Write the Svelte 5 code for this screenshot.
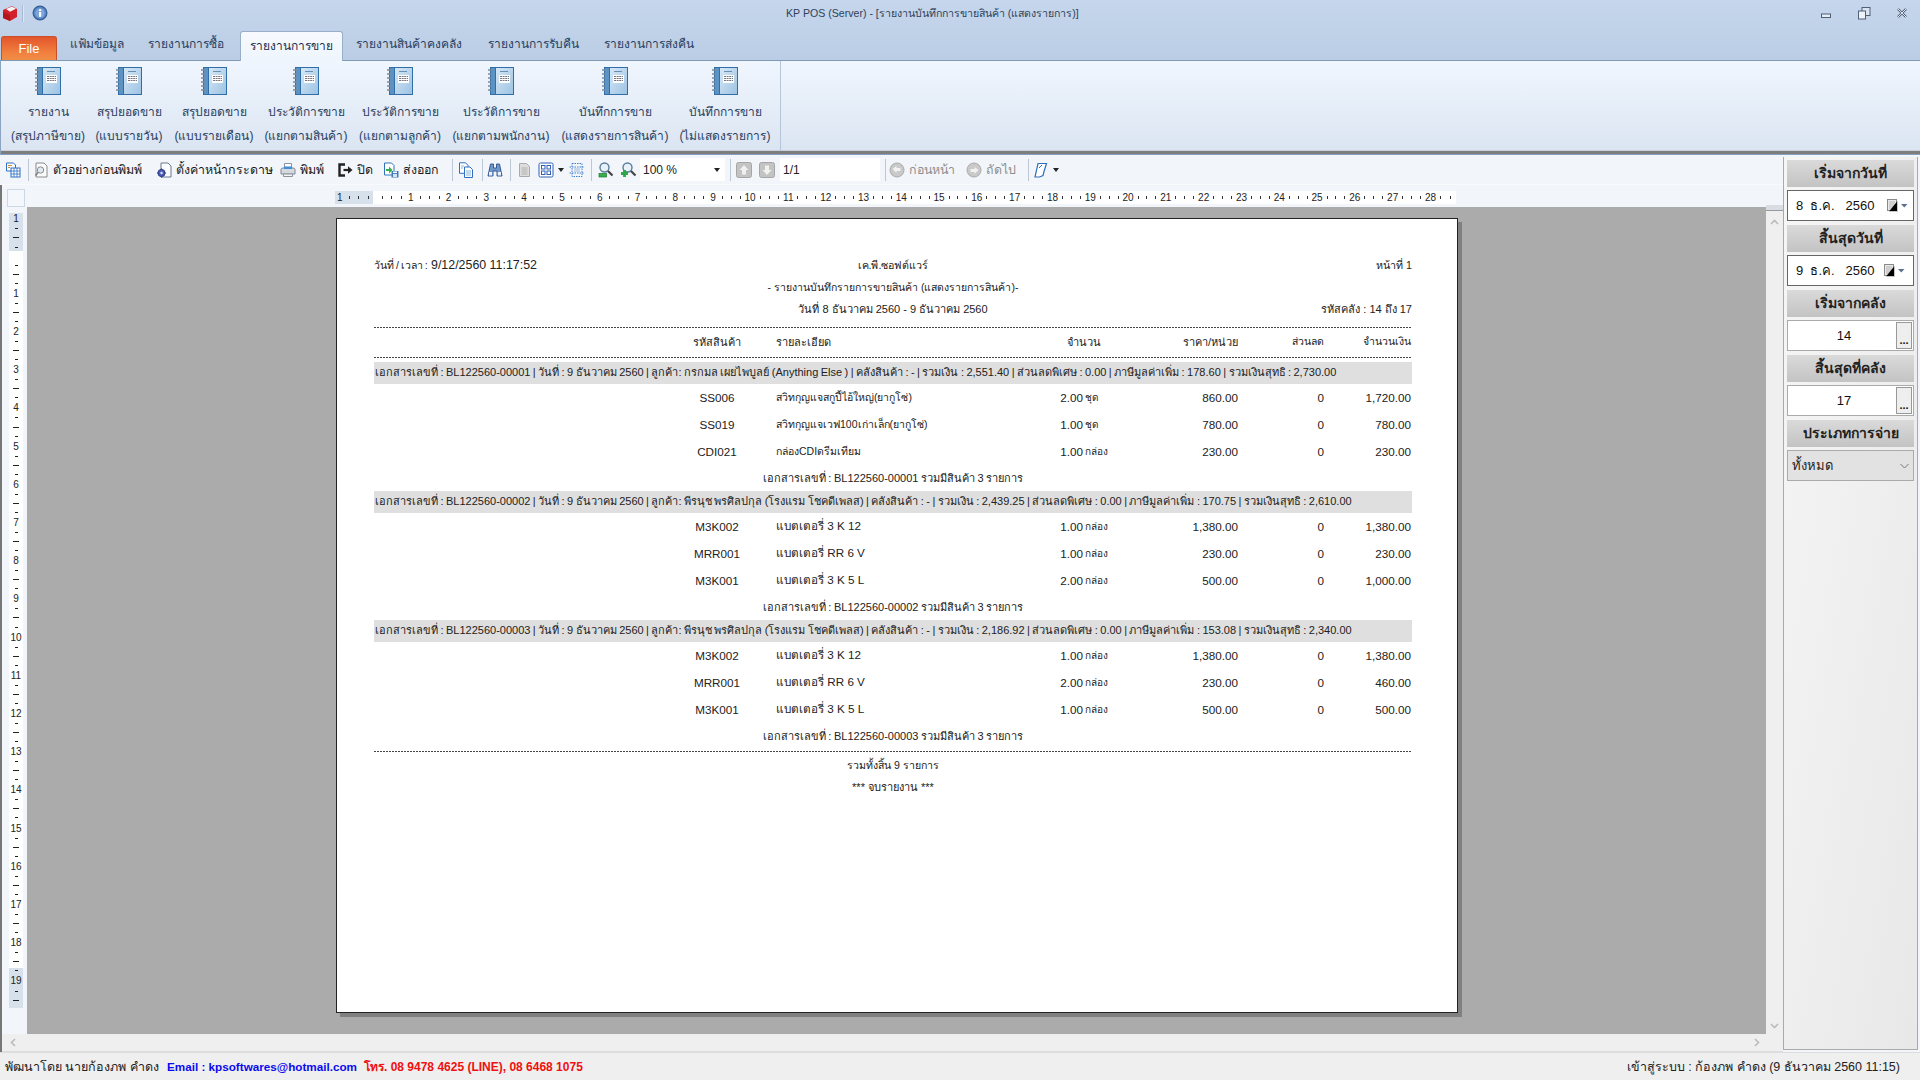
<script>
  const tabs = [
    { t: 'แฟ้มข้อมูล', w: 70 },
    { t: 'รายงานการซื้อ', w: 108 },
    { t: 'รายงานการขาย', w: 103, active: true },
    { t: 'รายงานสินค้าคงคลัง', w: 132 },
    { t: 'รายงานการรับคืน', w: 116 },
    { t: 'รายงานการส่งคืน', w: 116 }
  ];
  const rib = [
    ['รายงาน', '(สรุปภาษีขาย)', 88],
    ['สรุปยอดขาย', '(แบบรายวัน)', 74],
    ['สรุปยอดขาย', '(แบบรายเดือน)', 96],
    ['ประวัติการขาย', '(แยกตามสินค้า)', 88],
    ['ประวัติการขาย', '(แยกตามลูกค้า)', 100],
    ['ประวัติการขาย', '(แยกตามพนักงาน)', 102],
    ['บันทึกการขาย', '(แสดงรายการสินค้า)', 126],
    ['บันทึกการขาย', '(ไม่แสดงรายการ)', 94]
  ];
  const rawTools = [
    { x: 5, w: 16, i: 'views' },
    { x: 28, w: 1, sep: true },
    { x: 33, w: 117, i: 'preview', t: 'ตัวอย่างก่อนพิมพ์' },
    { x: 156, w: 119, i: 'setup', t: 'ตั้งค่าหน้ากระดาษ' },
    { x: 280, w: 50, i: 'print', t: 'พิมพ์' },
    { x: 337, w: 39, i: 'exit', t: 'ปิด' },
    { x: 383, w: 62, i: 'export', t: 'ส่งออก' },
    { x: 452, w: 1, sep: true },
    { x: 458, w: 16, i: 'copy' },
    { x: 482, w: 1, sep: true },
    { x: 487, w: 16, i: 'bino' },
    { x: 510, w: 1, sep: true },
    { x: 516, w: 16, i: 'gdoc' },
    { x: 538, w: 26, i: 'multi', drop: true },
    { x: 569, w: 16, i: 'dotted' },
    { x: 591, w: 1, sep: true },
    { x: 598, w: 16, i: 'zout' },
    { x: 621, w: 16, i: 'zin' },
    { x: 640, w: 85, combo: true },
    { x: 730, w: 1, sep: true },
    { x: 736, w: 16, i: 'up' },
    { x: 759, w: 16, i: 'down' },
    { x: 780, w: 100, pg: true },
    { x: 885, w: 1, sep: true },
    { x: 889, w: 68, i: 'back', t: 'ก่อนหน้า', dis: true },
    { x: 966, w: 51, i: 'next', t: 'ถัดไป', dis: true },
    { x: 1028, w: 1, sep: true },
    { x: 1033, w: 26, i: 'pen', drop: true }
  ];
  let prevEnd = 0;
  const tools = rawTools.map((o) => {
    const r = { ...o, ml: o.x - prevEnd };
    prevEnd = o.x + o.w;
    return r;
  });

  const inches = Array.from({ length: 28 }, (_, i) => i + 1);
  const vinches = Array.from({ length: 19 }, (_, i) => i + 1);

  const doc = [
    {
      no: '00001',
      head: 'เอกสารเลขที่ : BL122560-00001 | วันที่ : 9 ธันวาคม 2560 | ลูกค้า: กรกมล เผยไพบูลย์ (Anything Else ) | คลังสินค้า : - | รวมเงิน : 2,551.40 | ส่วนลดพิเศษ : 0.00 | ภาษีมูลค่าเพิ่ม : 178.60 | รวมเงินสุทธิ : 2,730.00',
      items: [
        ['SS006', 'สวิทกุญแจสกูปี้ไอ้ใหญ่(ยากูโซ่)', '2.00', 'ชุด', '860.00', '1,720.00', true],
        ['SS019', 'สวิทกุญแจเวฟ100เก่าเล็ก(ยากูโซ่)', '1.00', 'ชุด', '780.00', '780.00', true],
        ['CDI021', 'กล่องCDIดรีมเทียม', '1.00', 'กล่อง', '230.00', '230.00', true]
      ]
    },
    {
      no: '00002',
      head: 'เอกสารเลขที่ : BL122560-00002 | วันที่ : 9 ธันวาคม 2560 | ลูกค้า: พีรนุช พรศิลปกุล (โรงแรม โชคดีเพลส) | คลังสินค้า : - | รวมเงิน : 2,439.25 | ส่วนลดพิเศษ : 0.00 | ภาษีมูลค่าเพิ่ม : 170.75 | รวมเงินสุทธิ : 2,610.00',
      items: [
        ['M3K002', 'แบตเตอรี่ 3 K 12', '1.00', 'กล่อง', '1,380.00', '1,380.00'],
        ['MRR001', 'แบตเตอรี่ RR 6 V', '1.00', 'กล่อง', '230.00', '230.00'],
        ['M3K001', 'แบตเตอรี่ 3 K 5 L', '2.00', 'กล่อง', '500.00', '1,000.00']
      ]
    },
    {
      no: '00003',
      head: 'เอกสารเลขที่ : BL122560-00003 | วันที่ : 9 ธันวาคม 2560 | ลูกค้า: พีรนุช พรศิลปกุล (โรงแรม โชคดีเพลส) | คลังสินค้า : - | รวมเงิน : 2,186.92 | ส่วนลดพิเศษ : 0.00 | ภาษีมูลค่าเพิ่ม : 153.08 | รวมเงินสุทธิ : 2,340.00',
      items: [
        ['M3K002', 'แบตเตอรี่ 3 K 12', '1.00', 'กล่อง', '1,380.00', '1,380.00'],
        ['MRR001', 'แบตเตอรี่ RR 6 V', '2.00', 'กล่อง', '230.00', '460.00'],
        ['M3K001', 'แบตเตอรี่ 3 K 5 L', '1.00', 'กล่อง', '500.00', '500.00']
      ]
    }
  ];
</script>

{#snippet book()}
  <svg width="27" height="30" viewBox="0 0 27 30">
    <defs>
      <linearGradient id="bk" x1="0" y1="0" x2="1" y2="1"><stop offset="0" stop-color="#d7e8f6"/><stop offset="1" stop-color="#9cc3e3"/></linearGradient>
    </defs>
    <rect x="2" y="1" width="24" height="28" fill="#2f6ea8"/>
    <rect x="3" y="2" width="4" height="26" fill="#5a93c4"/>
    <rect x="8" y="2" width="17" height="26" fill="url(#bk)"/>
    <rect x="11" y="9" width="11" height="8" fill="#fff"/>
    <path d="M12 10.5h9M12 12.5h9M12 14.5h9" stroke="#667" stroke-width=".9" stroke-dasharray="2 .6"/>
    <path d="M12 5.5h8" stroke="#5d86ad" stroke-width=".9"/>
    <path d="M0 4h4M0 8h4M0 12h4M0 16h4M0 20h4M0 24h4" stroke="#7d8a99" stroke-width="1.4"/>
  </svg>
{/snippet}

{#snippet icon(id)}
  <svg class="ti" width="16" height="16" viewBox="0 0 16 16" fill="none">
    {#if id === 'views'}
      <path d="M1.5 1h7l2 2v6h-9z" fill="#fff" stroke="#2f6fc0"/>
      <rect x="6" y="6" width="9" height="9" fill="#fff" stroke="#2f6fc0"/>
      <path d="M6 9h9M6 12h9M9 6v9M12 6v9" stroke="#2f6fc0" stroke-width=".8"/>
      <path d="M3 3.5h4M3 5.5h2" stroke="#d88a30"/>
    {:else if id === 'preview'}
      <path d="M3 1h8l3 3v11H3z" fill="#fbfbfb" stroke="#8a8a8a"/>
      <circle cx="7.5" cy="8" r="3.2" fill="#dfeaf3" stroke="#8a8a8a"/>
      <path d="M5 10.5l-2.5 3" stroke="#777" stroke-width="1.4"/>
    {:else if id === 'setup'}
      <path d="M5 1h7l3 3v11H5z" fill="#fafcff" stroke="#68788c"/>
      <circle cx="5.5" cy="11" r="3.6" fill="#4a5cb8" stroke="#2e3a80"/>
      <circle cx="5.5" cy="11" r="1.2" fill="#dbe2fa"/>
      <path d="M5.5 6.6v1.2M5.5 14.2v1.2M1.1 11h1.2M8.7 11h1.2" stroke="#2e3a80" stroke-width="1.2"/>
    {:else if id === 'print'}
      <path d="M4.5 1.5h7v5h-7z" fill="#fff" stroke="#8a94a0"/>
      <path d="M1 7.5q0-1.5 2-1.5h10q2 0 2 1.5V12H1z" fill="#d5dae0" stroke="#7d8792"/>
      <rect x="4" y="4.5" width="8" height="2.5" fill="#3f8ed8"/>
      <path d="M3.5 12h9v2.5h-9z" fill="#f5f5f5" stroke="#8a94a0"/>
    {:else if id === 'exit'}
      <path d="M8 2.5H2.5v11H8" stroke="#222" stroke-width="2.4"/>
      <path d="M6.5 8h6" stroke="#222" stroke-width="2.2"/>
      <path d="M11 4.2L15.5 8 11 11.8z" fill="#222"/>
    {:else if id === 'export'}
      <path d="M1.5 1h7l2.5 2.5V13h-9.5z" fill="#fff" stroke="#3272b8"/>
      <path d="M3 7h3V4.5L9.5 8 6 11.5V9H3z" fill="#34b04a"/>
      <rect x="8.5" y="9" width="7" height="6.5" fill="#3d78b8"/>
      <rect x="10" y="12" width="4" height="3" fill="#d6e4f2"/>
      <rect x="10" y="9.5" width="4" height="1.6" fill="#fff"/>
    {:else if id === 'copy'}
      <path d="M1.5 .8h6l2.5 2.5v8H1.5z" fill="#fff" stroke="#2f6fc0"/>
      <path d="M6.5 5h5.5l2.5 2.5v8H6.5z" fill="#fff" stroke="#2f6fc0"/>
      <path d="M8 9h5M8 11h5M8 13h5M3 4h3M3 6h2" stroke="#7ea8da" stroke-width=".9"/>
    {:else if id === 'bino'}
      <path d="M3.5 2h3v4h3V2h3l2.5 12H10V9H6v5H1z" fill="#6f97c8" stroke="#2a4f8c" stroke-width=".9"/>
      <rect x="2" y="10" width="3.2" height="3.5" fill="#e8f0fa"/>
      <rect x="10.8" y="10" width="3.2" height="3.5" fill="#e8f0fa"/>
    {:else if id === 'gdoc'}
      <path d="M3.5 1.5h7l3 3v10h-10z" fill="#ddd" stroke="#aaa"/>
      <path d="M5.5 6h6M5.5 8h6M5.5 10h6M5.5 12h6" stroke="#b0b0b0"/>
    {:else if id === 'multi'}
      <rect x="1" y="1" width="14" height="14" rx="1.5" fill="#fff" stroke="#2f5fb5"/>
      <rect x="3.5" y="3.5" width="3.5" height="3.5" stroke="#2f5fb5"/>
      <rect x="9" y="3.5" width="3.5" height="3.5" stroke="#2f5fb5"/>
      <rect x="3.5" y="9" width="3.5" height="3.5" stroke="#2f5fb5"/>
      <rect x="9" y="9" width="3.5" height="3.5" stroke="#2f5fb5"/>
    {:else if id === 'dotted'}
      <rect x="3" y="1.5" width="10" height="13" stroke="#3f7fd0" stroke-dasharray="1.5 1"/>
      <path d="M.5 5h15M.5 11h15" stroke="#3f7fd0" stroke-dasharray="1.5 1"/>
      <path d="M5 7h6M5 9h6" stroke="#9bb8dd"/>
    {:else if id === 'zout' || id === 'zin'}
      <circle cx="6.5" cy="5.5" r="4.5" fill="#e7f1fa" stroke="#5b7d99" stroke-width="1.4"/>
      <path d="M10 9l4.5 4.5" stroke="#444" stroke-width="2.2"/>
      {#if id === 'zout'}
        <rect x="1" y="11.5" width="7.5" height="3.5" fill="#33b04a" stroke="#1d7a30" stroke-width=".7"/>
      {:else}
        <path d="M3.5 8v7M0 11.5h7" stroke="#2aa844" stroke-width="2.8"/>
      {/if}
    {:else if id === 'up' || id === 'down'}
      <rect x=".5" y=".5" width="15" height="15" rx="2" fill="#c3c3c3" stroke="#a5a5a5"/>
      {#if id === 'up'}
        <path d="M8 3l4.5 5H10v4.5H6V8H3.5z" fill="#f1f1f1"/>
      {:else}
        <path d="M8 13l4.5-5H10V3.5H6V8H3.5z" fill="#f1f1f1"/>
      {/if}
    {:else if id === 'back' || id === 'next'}
      <circle cx="8" cy="8" r="7" fill="#c9c9c9" stroke="#aaa"/>
      {#if id === 'back'}
        <path d="M3.5 7l4-3v2h4v3h-4v2z" fill="#f2f2f2"/>
      {:else}
        <path d="M12.5 8l-4-3v2h-4v3h4v2z" fill="#f2f2f2"/>
      {/if}
    {:else if id === 'pen'}
      <path d="M5 1.5h8.5L11 9.5l-1 4-3.5 1.5H2z" fill="#fff" stroke="#2f6fc0" stroke-width="1.2"/>
      <path d="M6 6l3-3" stroke="#2f6fc0"/>
    {/if}
  </svg>
{/snippet}

{#snippet cal()}
  <svg class="cal" width="21" height="13" viewBox="0 0 21 13">
    <rect x=".5" y=".5" width="9" height="11" fill="#e9e9e9" stroke="#8a8a8a"/>
    <path d="M2 3h6M2 5h6M2 7h6M2 9h6" stroke="#b5b5b5"/>
    <path d="M10.5 2v10.5H2" stroke="#c8c8c8"/>
    <path d="M14 5h6.5l-3.25 3.5z" fill="#5b6f8f"/>
  </svg>
{/snippet}

<div class="app">
  <header class="head">
    <div class="titlerow">
      <svg class="appicon" width="18" height="18" viewBox="0 0 18 18">
        <path d="M2 6l9-4 5 3v8l-7 4-7-3z" fill="#d3202a"/>
        <path d="M5 5l6-2.6 4 2.4-6 3z" fill="#f3f3f3"/>
        <path d="M2 8l7 3v6l-7-3z" fill="#b01820"/>
      </svg>
      <span class="tsep"></span>
      <svg width="16" height="16" viewBox="0 0 16 16" class="info">
        <circle cx="8" cy="8" r="6.8" fill="#5f8ccc" stroke="#3a6298" stroke-width="1.4"/>
        <circle cx="8" cy="8" r="4.6" fill="#7fa6dc"/>
        <rect x="7" y="7" width="2.2" height="4.8" fill="#fff"/>
        <rect x="7" y="4.2" width="2.2" height="1.9" fill="#fff"/>
      </svg>
      <span class="title">KP POS (Server) - [รายงานบันทึกการขายสินค้า (แสดงรายการ)]</span>
      <div class="winbtns">
        <svg width="12" height="12" viewBox="0 0 12 12"><rect x="1.5" y="7" width="9" height="3.5" fill="#e7edf6" stroke="#4e5f76"/></svg>
        <svg width="14" height="14" viewBox="0 0 14 14"><rect x="5" y="1.5" width="8" height="8" fill="#d9e3f1" stroke="#4e5f76"/><rect x="1.5" y="5" width="7" height="8" fill="#eef3f9" stroke="#4e5f76"/></svg>
        <svg width="12" height="12" viewBox="0 0 12 12"><path d="M2 2l8 8M10 2l-8 8" stroke="#4e5f76" stroke-width="2.4"/><path d="M2 2l8 8M10 2l-8 8" stroke="#eef3f9" stroke-width=".9"/></svg>
      </div>
    </div>
    <nav class="tabs">
      <div class="file">File</div>
      {#each tabs as tab}
        <div class="tab" class:active={tab.active} style="width:{tab.w}px">{tab.t}</div>
      {/each}
    </nav>
  </header>

  <section class="ribbon">
    <div class="ribgroup">
      {#each rib as r}
        <div class="ribbtn" style="width:{r[2]}px">
          {@render book()}
          <span class="l1">{r[0]}</span>
          <span class="l2">{r[1]}</span>
        </div>
      {/each}
    </div>
  </section>

  <main class="main">
    <div class="viewer">
      <div class="toolbar">
        {#each tools as t}
          {#if t.sep}
            <span class="sep" style="margin-left:{t.ml}px"></span>
          {:else if t.combo}
            <span class="combo" style="margin-left:{t.ml}px;width:{t.w}px"><span>100 %</span><i class="caret"></i></span>
          {:else if t.pg}
            <span class="pgbox" style="margin-left:{t.ml}px;width:{t.w}px">1/1</span>
          {:else}
            <span class="tool" class:dis={t.dis} style="margin-left:{t.ml}px;width:{t.w}px">
              {@render icon(t.i)}
              {#if t.t}<span class="tt">{t.t}</span>{/if}
              {#if t.drop}<i class="caret small"></i>{/if}
            </span>
          {/if}
        {/each}
      </div>
      <div class="rulerrow">
        <span class="corner"></span>
        <div class="hruler">
          <div class="hmargin">
            <span class="rl">1</span><i class="d"></i><i class="d"></i><i class="d"></i>
          </div>
          <div class="hrest">
            {#each inches as n}
              <div class="hcell"><i class="d"></i><i class="d"></i><i class="d"></i><span class="rl">{n}</span></div>
            {/each}
            <div class="hcell tail"><i class="d"></i><i class="d"></i></div>
          </div>
        </div>
      </div>
      <div class="middle">
        <div class="vcol">
          <div class="vruler">
            <div class="vcell first"><span class="rl">1</span><i class="dv"></i><i class="dv long"></i><i class="dv"></i><span></span></div>
            {#each vinches as n}
              <div class="vcell"><i class="dv"></i><i class="dv long"></i><i class="dv"></i><span class="rl">{n}</span></div>
            {/each}
            <div class="vcell"><i class="dv"></i><i class="dv long"></i><i class="dv"></i></div>
          </div>
        </div>
        <div class="work">
          <article class="page">
            <div class="line h22 three top">
              <span class="stamp"><span class="lab">วันที่ / เวลา :</span> 9/12/2560 11:17:52</span>
              <span class="c co">เค.พี.ซอฟต์แวร์</span>
              <span class="r co">หน้าที่ 1</span>
            </div>
            <div class="line h21 three">
              <span></span>
              <span class="c t2">- รายงานบันทึกรายการขายสินค้า (แสดงรายการสินค้า)-</span>
              <span></span>
            </div>
            <div class="line h21 three">
              <span></span>
              <span class="c t3">วันที่ 8 ธันวาคม 2560 - 9 ธันวาคม 2560</span>
              <span class="r t3">รหัสคลัง : 14 ถึง 17</span>
            </div>
            <div class="dash d1"></div>
            <div class="cols hdr">
              <span class="c">รหัสสินค้า</span>
              <span class="det">รายละเอียด</span>
              <span class="qh">จำนวน</span>
              <span class="r pr">ราคา/หน่วย</span>
              <span class="r sm">ส่วนลด</span>
              <span class="r sm">จำนวนเงิน</span>
            </div>
            <div class="dash d2"></div>
            {#each doc as d}
              <div class="dochead">{d.head}</div>
              {#each d.items as it}
                <div class="cols item">
                  <span class="c">{it[0]}</span>
                  <span class="det" class:narrow={it[6]}>{it[1]}</span>
                  <span class="r">{it[2]}</span>
                  <span class="unit">{it[3]}</span>
                  <span class="r">{it[4]}</span>
                  <span class="r">0</span>
                  <span class="r">{it[5]}</span>
                </div>
              {/each}
              <div class="summary">เอกสารเลขที่ : BL122560-{d.no} รวมมีสินค้า 3 รายการ</div>
            {/each}
            <div class="dash d3"></div>
            <div class="foot f1">รวมทั้งสิ้น 9 รายการ</div>
            <div class="foot f2">*** จบรายงาน ***</div>
          </article>
        </div>
        <div class="vscroll">
          <span class="thumb"></span>
          <svg width="9" height="6" viewBox="0 0 9 6"><path d="M1 5l3.5-3.5L8 5" stroke="#bbb" stroke-width="1.6" fill="none"/></svg>
          <svg width="9" height="6" viewBox="0 0 9 6"><path d="M1 1l3.5 3.5L8 1" stroke="#bbb" stroke-width="1.6" fill="none"/></svg>
        </div>
      </div>
      <div class="hscroll">
        <svg width="6" height="9" viewBox="0 0 6 9"><path d="M5 1L1.5 4.5 5 8" stroke="#bbb" stroke-width="1.6" fill="none"/></svg>
        <svg width="6" height="9" viewBox="0 0 6 9"><path d="M1 1l3.5 3.5L1 8" stroke="#bbb" stroke-width="1.6" fill="none"/></svg>
      </div>
    </div>

    <aside class="side">
      <div class="shead">เริ่มจากวันที่</div>
      <div class="sbox date"><span class="dt">8&nbsp; ธ.ค.&nbsp;&nbsp; 2560</span>{@render cal()}</div>
      <div class="shead">สิ้นสุดวันที่</div>
      <div class="sbox date d2nd"><span class="dt">9&nbsp; ธ.ค.&nbsp;&nbsp; 2560</span>{@render cal()}</div>
      <div class="shead">เริ่มจากคลัง</div>
      <div class="sbox num"><span class="val">14</span><span class="dots">...</span></div>
      <div class="shead">สิ้นสุดที่คลัง</div>
      <div class="sbox num"><span class="val">17</span><span class="dots">...</span></div>
      <div class="shead">ประเภทการจ่าย</div>
      <div class="sbox sel"><span>ทั้งหมด</span>
        <svg width="9" height="6" viewBox="0 0 9 6"><path d="M.5 1l4 4 4-4" stroke="#777" fill="none"/></svg>
      </div>
    </aside>
  </main>

  <footer class="status">
    <span class="dev">พัฒนาโดย นายก้องภพ คำดง</span>
    <span class="mail">Email : kpsoftwares@hotmail.com</span>
    <span class="tel">โทร. 08 9478 4625 (LINE), 08 6468 1075</span>
    <span class="login">เข้าสู่ระบบ : ก้องภพ คำดง (9 ธันวาคม 2560 11:15)</span>
  </footer>
</div>

<style>
  :global(body) { margin: 0; background: #eee; }
  .app {
    width: 1920px; height: 1080px; overflow: hidden;
    display: flex; flex-direction: column;
    font-family: "Liberation Sans", "Noto Sans", "DejaVu Sans", sans-serif;
    color: #1a1a1a; font-size: 13px;
  }
  .head { height: 60px; flex: none; background: linear-gradient(#c5d6ed, #bbcde4); position: relative; }
  .titlerow { height: 30px; box-sizing: border-box; padding: 0 0 4px 1px; display: flex; align-items: center; }
  .tsep { width: 2px; height: 17px; background: #dde6f3; border-left: 1px solid #a9bbd3; margin: 0 8px 0 3px; box-sizing: border-box; }
  .title { margin-left: 738px; font-size: 10.6px; color: #2f4159; white-space: nowrap; width: 300px; }
  .winbtns { margin-left: auto; margin-right: 12px; display: flex; gap: 25px; align-items: center; }
  .tabs { height: 30px; display: flex; align-items: flex-end; padding-left: 1px; }
  .file {
    width: 56px; height: 24px; box-sizing: border-box; text-align: center; line-height: 24px;
    color: #fff; font-size: 13px; border-radius: 3px 3px 0 0; border: 1px solid #c9502a; border-bottom: none;
    background: linear-gradient(#e2552b, #f2813f 70%, #ef8d46); margin-right: 5px;
  }
  .tab { height: 30px; line-height: 28px; text-align: center; color: #27405f; white-space: nowrap; box-sizing: border-box; font-size: 12px; }
  .tab.active {
    background: linear-gradient(#f7fafe, #eef5fd); border-radius: 3px 3px 0 0;
    border: 1px solid #98aec9; border-bottom: none; color: #1b2f4a; position: relative; top: 1px; z-index: 2;
  }
  .ribbon {
    height: 95px; flex: none; box-sizing: border-box; position: relative;
    border-top: 1px solid #7f9ab9; border-left: 1px solid #8ba4c2; border-bottom: 1px solid #86a0bf;
    background: linear-gradient(#f0f6fe, #dae4f1); box-shadow: inset 0 -4px 0 #c8cfd8;
  }
  .ribbon::after { content: ""; display: block; position: absolute; left: 0; right: 0; bottom: 0; height: 3px; background: #7d7d7d; }
  .ribgroup { height: 90px; width: 780px; box-sizing: border-box; padding-left: 3px; display: flex; border-right: 1px solid #b5c6db; }
  .ribbtn { display: flex; flex-direction: column; align-items: center; padding-top: 5px; box-sizing: border-box; flex: none; white-space: nowrap; color: #27405f; font-size: 12px; }
  .ribbtn .l1 { margin-top: 4px; height: 24px; line-height: 24px; }
  .ribbtn .l2 { height: 24px; line-height: 24px; }
  .main { flex: 1; min-height: 0; display: flex; background: #f2f6fb; }
  .viewer { width: 1783px; flex: none; display: flex; flex-direction: column; border-left: 2px solid #777; box-sizing: border-box; }
  .toolbar { height: 30px; flex: none; display: flex; align-items: center; margin-left: -2px; background: #f2f6fb; border-bottom: 1px solid #f8fafd; box-sizing: border-box; }
  .sep { width: 1px; height: 22px; background: #bcc8d6; flex: none; }
  .tool { display: flex; align-items: center; gap: 4px; flex: none; white-space: nowrap; color: #1a1a1a; font-size: 12.4px; }
  .tool.dis { color: #8d8d8d; }
  .ti { flex: none; }
  .tt { line-height: 16px; }
  .caret { display: inline-block; width: 0; height: 0; border-left: 3.5px solid transparent; border-right: 3.5px solid transparent; border-top: 4px solid #222; flex: none; margin-right: 2px; }
  .combo, .pgbox { height: 23px; background: #fff; display: flex; align-items: center; justify-content: space-between; box-sizing: border-box; padding: 0 3px; flex: none; font-size: 12px; color: #222; }
  .pgbox { justify-content: flex-start; }
  .rulerrow { height: 22px; box-sizing: border-box; padding-top: 3px; flex: none; display: flex; align-items: center; }
  .corner { width: 18px; height: 18px; margin-left: 5px; box-sizing: border-box; border: 1px solid #ccd8e6; background: #f4f7fb; flex: none; }
  .hruler { margin-left: 310px; width: 1121px; height: 13px; display: flex; background: #fff; flex: none; overflow: hidden; }
  .hmargin { width: 38px; flex: none; background: #d7e1ec; display: grid; grid-template-columns: repeat(4, 1fr); align-items: center; justify-items: center; }
  .hrest { display: flex; padding-left: 4.7px; }
  .hcell { width: 37.8px; flex: none; display: grid; grid-template-columns: repeat(4, 1fr); align-items: center; justify-items: center; }
  .rl { font-size: 10px; line-height: 11px; color: #222; }
  .d { width: 1px; height: 3px; background: #333; display: block; }
  .middle { flex: 1; min-height: 0; display: flex; }
  .vcol { width: 25px; flex: none; padding-top: 11px; box-sizing: border-box; }
  .vruler {
    width: 14px; height: 795px; margin-left: 7px; clip-path: inset(-6px 0 0 0);
    background: linear-gradient(#d7e1ec 0 38px, #fff 38px 755px, #d7e1ec 755px);
  }
  .vcell { height: 38.2px; display: grid; grid-template-rows: repeat(4, 1fr); align-items: center; justify-items: center; }
  .vcell.first { height: 47.5px; margin-top: -4.8px; grid-template-rows: repeat(5, 1fr); }
  .dv { width: 3px; height: 1px; background: #222; display: block; }
  .dv.long { width: 6px; }
  .work { width: 1739px; flex: none; background: #ababab; padding: 11px 0 0 309px; box-sizing: border-box; }
  .page {
    width: 1122px; height: 795px; box-sizing: border-box; background: #fff;
    border: 1px solid #222; box-shadow: 4px 4px 0 #808080; padding: 36px 45px 0 37px;
    font-size: 12px; color: #222;
  }
  .line { display: grid; align-items: center; white-space: nowrap; }
  .three { grid-template-columns: 1fr 1fr 1fr; }
  .top { box-sizing: border-box; padding-bottom: 1px; }
  .h22 { height: 22px; } .h21 { height: 21px; }
  .c { text-align: center; } .r { text-align: right; }
  .stamp { font-size: 12.4px; }
  .lab { font-size: 10.5px; word-spacing: -1px; }
  .co { font-size: 10.7px; }
  .t2 { font-size: 10.5px; }
  .t3 { font-size: 11px; }
  .dash { width: 1038px; height: 1px; background: repeating-linear-gradient(90deg, #444 0 2px, transparent 2px 3px); }
  .d1 { margin-top: 8px; }
  .d3 { margin-top: 2px; }
  .cols { display: grid; padding-left: 304px; grid-template-columns: 78px 284px 43px 67px 88px 86px 87px; align-items: center; width: 1037px; box-sizing: border-box; white-space: nowrap; }
  .det { padding-left: 20px; }
  .narrow { font-size: 10.5px; }
  .hdr { height: 29px; padding-bottom: 2px; font-size: 11px; grid-template-columns: 78px 284px 61px 49px 88px 86px 87px; }
  .qh { text-align: right; grid-column: 3; }
  .pr { grid-column: 5; }
  .sm { font-size: 10.5px; }
  .d2 { margin-bottom: 4px; }
  .dochead { height: 22px; line-height: 21px; background: #dfdfdf; width: 1038px; white-space: nowrap; box-sizing: border-box; padding-left: 1px; font-size: 11px; word-spacing: -.6px; }
  .item { height: 27px; padding-bottom: 1px; font-size: 11.7px; }
  .unit { font-size: 10px; padding-left: 2px; }
  .summary { height: 26px; line-height: 26px; text-align: center; width: 1038px; white-space: nowrap; font-size: 11px; word-spacing: -.5px; }
  .foot { text-align: center; width: 1038px; }
  .f1 { height: 22px; line-height: 22px; margin-top: 2px; font-size: 10.6px; }
  .f2 { height: 22px; line-height: 22px; font-size: 11px; }
  .vscroll { width: 17px; flex: none; background: #efefef; display: flex; flex-direction: column; align-items: center; }
  .vscroll svg:nth-of-type(1) { margin-top: 8px; }
  .vscroll svg:nth-of-type(2) { margin-top: auto; margin-bottom: 5px; }
  .thumb { width: 17px; height: 5px; background: #d8dde3; border-bottom: 1px solid #999; margin-top: -2px; }
  .hscroll { height: 17px; flex: none; background: #efefef; display: flex; align-items: center; justify-content: space-between; padding: 0 23px 0 8px; border-bottom: 1px solid #ddd; }
  .side {
    flex: none; width: 135px; margin-top: 2px; margin-bottom: 2px; box-sizing: border-box; border: 1px solid #aaa; border-top: none;
    background: linear-gradient(100deg, #f6f6f6, #e8e8e8); padding: 3px 3px 0 3px; display: flex; flex-direction: column; gap: 3px;
  }
  .shead {
    height: 27px; line-height: 27px; text-align: center; font-weight: 700; font-size: 14px; color: #222; width: 127px;
    background: linear-gradient(#dadada, #c3c3c3);
  }
  .sbox { width: 127px; height: 31px; box-sizing: border-box; background: #fff; display: flex; align-items: center; margin-bottom: 1px; }
  .date { border: 1px solid #666; padding-left: 8px; }
  .dt { font-size: 13px; color: #111; white-space: nowrap; width: 91px; }
  .cal { flex: none; }
  .d2nd .cal { margin-left: -3px; }
  .num { border: 1px solid #aaa; padding-right: 1px; }
  .val { flex: 1; text-align: center; font-size: 13px; padding-left: 4px; color: #111; }
  .dots { width: 16px; height: 27px; box-sizing: border-box; background: #eee; border: 1px solid #999; font-weight: 700; font-size: 11px; line-height: 34px; text-align: center; color: #111; }
  .sel { background: #e2e2e2; border: 1px solid #aaa; justify-content: space-between; padding: 0 4px; font-size: 13px; color: #222; }
  .status {
    height: 28px; flex: none; display: flex; align-items: center; background: #efefef; border-top: 1px solid #ddd; box-sizing: border-box;
    padding: 0 20px 0 5px; white-space: nowrap; font-size: 12px;
  }
  .dev { width: 162px; font-size: 12.5px; color: #222; }
  .mail { color: #0a0aef; font-weight: 700; width: 197px; font-size: 11.7px; }
  .tel { color: #f01010; font-weight: 700; }
  .login { margin-left: auto; font-size: 12.5px; color: #222; }
</style>
